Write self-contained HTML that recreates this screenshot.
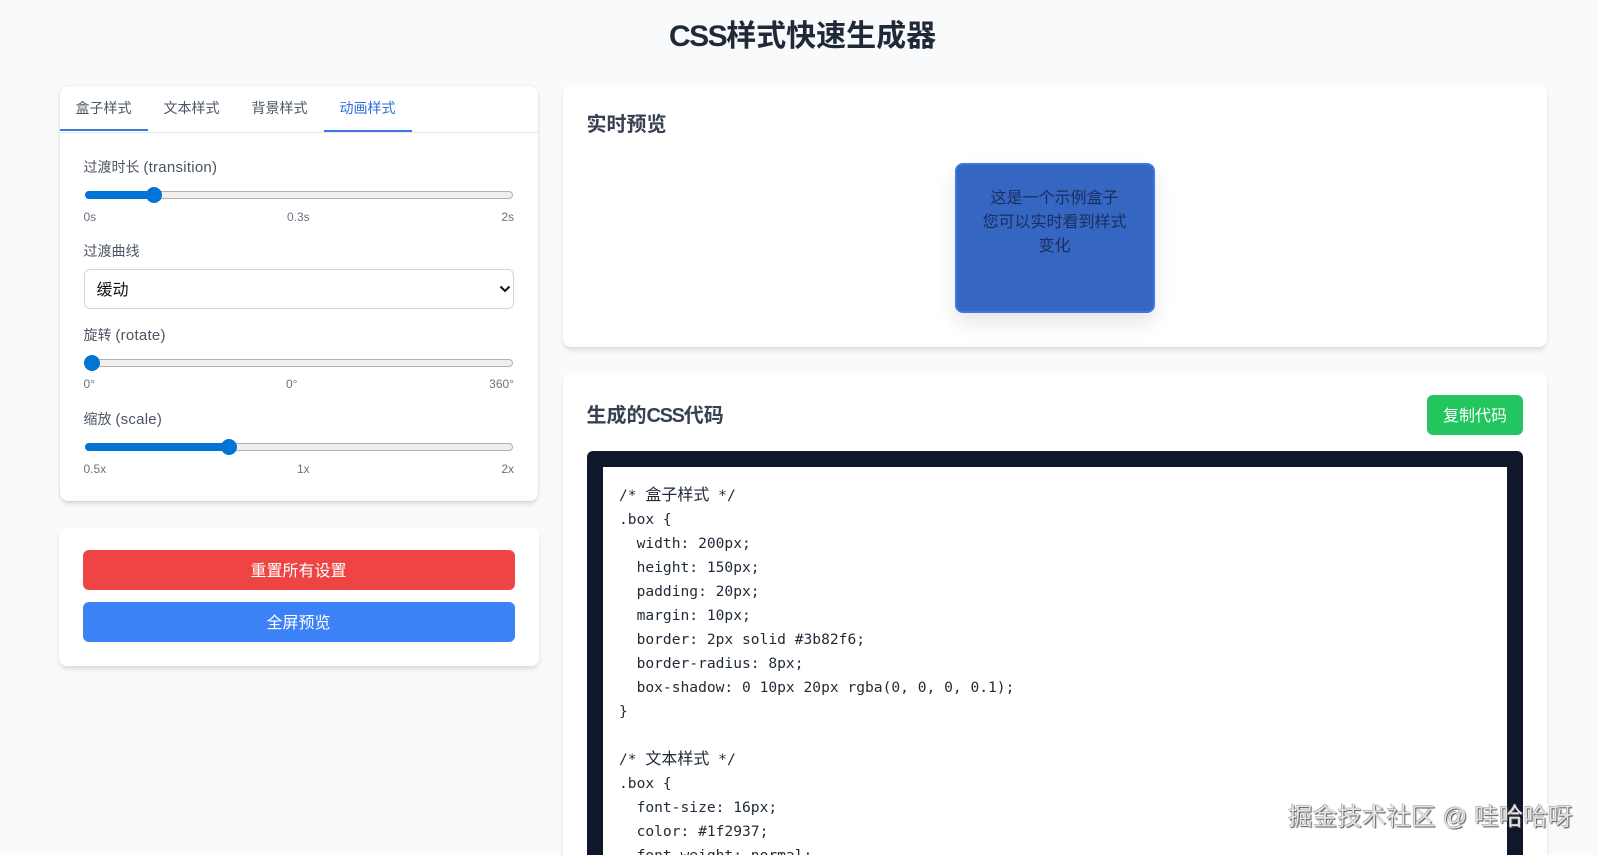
<!DOCTYPE html>
<html lang="zh-CN">
<head>
<meta charset="utf-8">
<title>CSS样式快速生成器</title>
<style>
html,body{margin:0;padding:0;width:1597px;height:855px;overflow:hidden;background:#f9fafb;font-family:"Liberation Sans","Noto Sans CJK SC",sans-serif;}
*{box-sizing:border-box;}
#page{position:relative;width:1597px;height:855px;overflow:hidden;background:#f9fafb;}
.a{position:absolute;white-space:nowrap;}
.card{position:absolute;background:#fff;border-radius:8px;box-shadow:0 4px 6px -1px rgba(0,0,0,.1),0 2px 4px -1px rgba(0,0,0,.06);}
.tab{position:absolute;top:98px;height:20px;line-height:20px;font-size:14px;color:#4b5563;white-space:nowrap;}
.lab{position:absolute;left:83.5px;height:20px;line-height:20px;font-size:14px;color:#4b5563;white-space:nowrap;}
.lab i{font-style:normal;font-size:15px;letter-spacing:.25px;}
.tick{position:absolute;height:16px;line-height:16px;font-size:12px;color:#6b7280;white-space:nowrap;}
.track{position:absolute;left:85px;width:428px;height:8px;background:#efefef;border:1px solid #b2b2b2;border-radius:4px;}
.fill{position:absolute;left:85px;height:8px;background:#0075d6;border-radius:4px 0 0 4px;}
.thumb{position:absolute;width:16px;height:16px;border-radius:50%;background:#0075d6;}
.btn{position:absolute;left:83px;width:432px;height:40px;line-height:44px;border-radius:6px;color:#fff;font-size:16px;text-align:center;text-indent:-1px;}
h2{position:absolute;margin:0;font-size:20px;line-height:28px;font-weight:700;color:#374151;white-space:nowrap;}
h2 i{font-style:normal;letter-spacing:-1.3px;}
pre{position:absolute;left:619px;top:484px;margin:0;font-family:"DejaVu Sans Mono","Noto Sans CJK SC",monospace;font-size:14.6px;line-height:24px;color:#1f2937;white-space:pre;}
pre span{font-family:"Noto Sans CJK SC",sans-serif;font-size:16px;line-height:16px;}
</style>
</head>
<body>
<div id="page">
<div class="a" style="left:669px;top:16px;height:42px;line-height:42px;font-size:30px;font-weight:700;color:#1f2937;"><span style="letter-spacing:-1.5px;">CSS</span>样式快速生成器</div>

<!-- Left control card -->
<div class="card" style="left:60px;top:86px;width:478px;height:415px;box-shadow:0 0 0 1px rgba(0,0,0,.035),0 4px 6px -1px rgba(0,0,0,.1),0 2px 4px -1px rgba(0,0,0,.06);"></div>
<div class="a" style="left:60px;top:132px;width:478px;height:1px;background:#e5e7eb;"></div>
<div class="tab" style="left:75.5px;">盒子样式</div>
<div class="tab" style="left:163.5px;">文本样式</div>
<div class="tab" style="left:251.5px;">背景样式</div>
<div class="tab" style="left:339.5px;color:#2f6bdc;">动画样式</div>
<div class="a" style="left:60px;top:129px;width:88px;height:2px;background:#3b78d8;"></div>
<div class="a" style="left:324px;top:130px;width:88px;height:2px;background:#3b78e6;"></div>

<div class="lab" style="top:157px;">过渡时长 <i>(transition)</i></div>
<div class="track" style="top:191px;"></div>
<div class="fill" style="top:191px;width:69px;"></div>
<div class="thumb" style="left:146px;top:187px;"></div>
<div class="tick" style="left:83.5px;top:209px;">0s</div>
<div class="tick" style="left:287px;top:209px;">0.3s</div>
<div class="tick" style="right:1083px;top:209px;">2s</div>

<div class="lab" style="top:241px;">过渡曲线</div>
<div class="a" style="left:84px;top:269px;width:430px;height:40px;border:1px solid #d1d5db;border-radius:6px;background:#fff;"></div>
<div class="a" style="left:96.5px;top:281px;height:20px;line-height:20px;font-size:16px;color:#111;">缓动</div>
<svg class="a" style="left:499px;top:285px;" width="12" height="8" viewBox="0 0 12 8"><path d="M1.5 1.5 L6 6 L10.5 1.5" fill="none" stroke="#111" stroke-width="2"/></svg>

<div class="lab" style="top:325px;">旋转 <i>(rotate)</i></div>
<div class="track" style="top:359px;"></div>
<div class="thumb" style="left:84px;top:355px;"></div>
<div class="tick" style="left:83.5px;top:376px;">0°</div>
<div class="tick" style="left:286px;top:376px;">0°</div>
<div class="tick" style="right:1083px;top:376px;">360°</div>

<div class="lab" style="top:408.5px;">缩放 <i>(scale)</i></div>
<div class="track" style="top:443px;"></div>
<div class="fill" style="top:443px;width:144px;"></div>
<div class="thumb" style="left:221px;top:439px;"></div>
<div class="tick" style="left:83.5px;top:460.5px;">0.5x</div>
<div class="tick" style="left:297px;top:460.5px;">1x</div>
<div class="tick" style="right:1083px;top:460.5px;">2x</div>

<!-- Left actions card -->
<div class="card" style="left:59px;top:528px;width:480px;height:138px;"></div>
<div class="btn" style="top:550px;background:#ef4444;">重置所有设置</div>
<div class="btn" style="top:602px;background:#3b82f6;">全屏预览</div>

<!-- Preview card -->
<div class="card" style="left:563px;top:85px;width:984px;height:262px;"></div>
<h2 style="left:586.5px;top:111px;">实时预览</h2>
<div class="a" style="left:955px;top:163px;width:200px;height:150px;background:#3566c2;border:2px solid #3b78e0;border-radius:8px;box-shadow:0 10px 20px rgba(0,0,0,.1);padding:22px 21px 20px 20px;text-align:center;white-space:normal;font-size:16px;line-height:24px;color:#1a2f60;">这是一个示例盒子<br>您可以实时看到样式变化</div>

<!-- Code card -->
<div class="card" style="left:563px;top:373px;width:984px;height:520px;"></div>
<h2 style="left:586.5px;top:402px;">生成的<i>CSS</i>代码</h2>
<div class="a" style="left:1427px;top:395px;width:96px;height:40px;line-height:44px;background:#22c55e;color:#fff;border-radius:6px;font-size:16px;text-align:center;">复制代码</div>
<div class="a" style="left:587px;top:451px;width:936px;height:440px;background:#11172a;border-radius:6px;"></div>
<div class="a" style="left:603px;top:467px;width:904px;height:420px;background:#fff;"></div>
<pre>/* <span>盒子样式</span> */
.box {
  width: 200px;
  height: 150px;
  padding: 20px;
  margin: 10px;
  border: 2px solid #3b82f6;
  border-radius: 8px;
  box-shadow: 0 10px 20px rgba(0, 0, 0, 0.1);
}

/* <span>文本样式</span> */
.box {
  font-size: 16px;
  color: #1f2937;
  font-weight: normal;
</pre>

<!-- Watermark -->
<div class="a" style="left:1288px;top:803px;height:30px;line-height:30px;font-size:24.6px;color:#e4e4e4;text-shadow:1px 1px 1px #555,-.5px -.5px 0 #999;">掘金技术社区 @ 哇哈哈呀</div>
</div>
</body>
</html>
